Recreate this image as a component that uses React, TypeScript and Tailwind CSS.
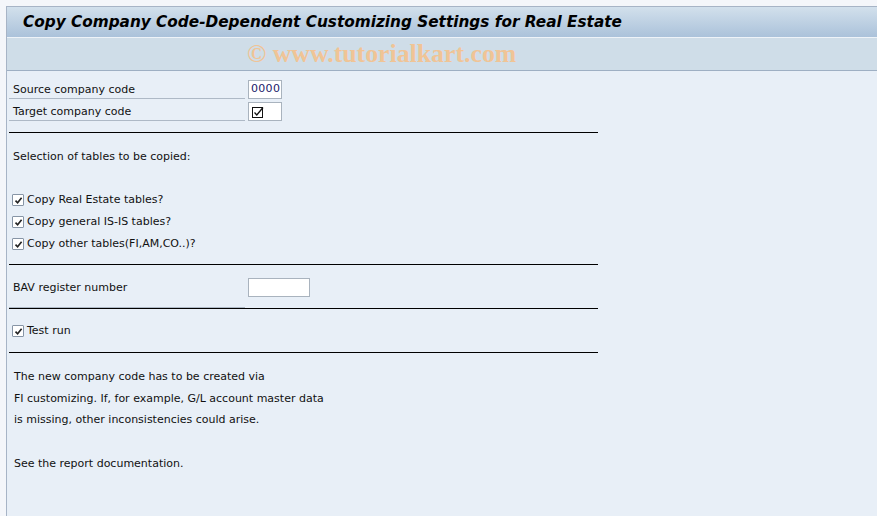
import React from "react";

const FONT = { fontFamily: '"DejaVu Sans", Verdana, sans-serif' };

function Check() {
  return (
    <span className="inline-flex items-center justify-center w-[12px] h-[12px] border border-[#8795a6] bg-white rounded-[1px] mr-[3px]">
      <svg width="9" height="9" viewBox="0 0 9 9">
        <path d="M1.5 4.6 L3.6 6.8 L7.6 1.8" fill="none" stroke="#222" strokeWidth="1.6" />
      </svg>
    </span>
  );
}

function Rule() {
  return <div className="w-[589px] h-px bg-black" />;
}

function Input({ width, children }: { width: number; children?: React.ReactNode }) {
  return (
    <div
      className="ml-[3px] h-[19px] mt-[1px] bg-white border border-[#a9b3be] flex items-center px-[2px] text-[#1a1a6a]"
      style={{ width }}
    >
      {children}
    </div>
  );
}

function FieldRow({ label, width, children }: { label: string; width: number; children?: React.ReactNode }) {
  return (
    <div className="flex h-[22px] items-start">
      <div className="w-[236px] h-[20px] border-b border-[#aeb9c6] pl-[4px] pt-[3px] flex items-center">{label}</div>
      <Input width={width}>{children}</Input>
    </div>
  );
}

function CheckRow({ label }: { label: string }) {
  return (
    <div className="h-[22px] flex items-center pl-[3px]">
      <Check />
      <span>{label}</span>
    </div>
  );
}

export default function App() {
  return (
    <div className="w-[877px] h-[516px] bg-[#f4f6fa] pt-[6px] pl-[6px] overflow-hidden" style={FONT}>
      <div className="h-[510px] border-l border-t border-[#a7b4c6] bg-[#e8eff7] flex flex-col">
        <div className="h-[30px] bg-gradient-to-b from-[#d2e0ec] to-[#abc2da] flex items-center pl-[16px]">
          <span className="text-[15.3px] font-bold italic text-black">
            Copy Company Code-Dependent Customizing Settings for Real Estate
          </span>
        </div>
        <div className="h-px bg-[#eef3f8]" />
        <div className="h-[33px] bg-[#cfdde8] border-b border-[#9eafc3] flex items-center pl-[240px]">
          <span
            className="text-[25.8px] font-bold text-[#f0c496] leading-none"
            style={{ fontFamily: '"Liberation Serif", "Times New Roman", serif' }}
          >
            © www.tutorialkart.com
          </span>
        </div>
        <div className="pl-[2px] pt-[8px] text-[11px] text-[#111]">
          <FieldRow label="Source company code" width={34}>
            <span className="text-[11px] tracking-[0.3px]">0000</span>
          </FieldRow>
          <FieldRow label="Target company code" width={34}>
            <svg width="12" height="12" viewBox="0 0 12 12" className="ml-[1px]">
              <rect x="0.5" y="1.5" width="10" height="10" fill="none" stroke="#111" />
              <path d="M2.5 6.5 L4.8 9 L11 1.5" fill="none" stroke="#111" strokeWidth="1.3" />
            </svg>
          </FieldRow>
          <div className="h-[9px]" />
          <Rule />
          <div className="h-[13px]" />
          <div className="h-[22px] flex items-center pl-[4px]">Selection of tables to be copied:</div>
          <div className="h-[21px]" />
          <CheckRow label="Copy Real Estate tables?" />
          <CheckRow label="Copy general IS-IS tables?" />
          <CheckRow label="Copy other tables(FI,AM,CO..)?" />
          <div className="h-[9px]" />
          <Rule />
          <div className="h-[12px]" />
          <div className="flex h-[22px] items-start">
            <div className="w-[236px] h-[20px] pl-[4px] pt-[3px] flex items-center">BAV register number</div>
            <Input width={62} />
          </div>
          <div className="h-[8px]" />
          <div className="w-[236px] h-px bg-[#aeb9c6]" />
          <Rule />
          <div className="h-[11px]" />
          <CheckRow label="Test run" />
          <div className="h-[10px]" />
          <Rule />
          <div className="pl-[5px] pt-[13px] leading-[21.5px]">
            <div>The new company code has to be created via</div>
            <div>FI customizing. If, for example, G/L account master data</div>
            <div>is missing, other inconsistencies could arise.</div>
            <div className="h-[22px]" />
            <div>See the report documentation.</div>
          </div>
        </div>
      </div>
    </div>
  );
}
